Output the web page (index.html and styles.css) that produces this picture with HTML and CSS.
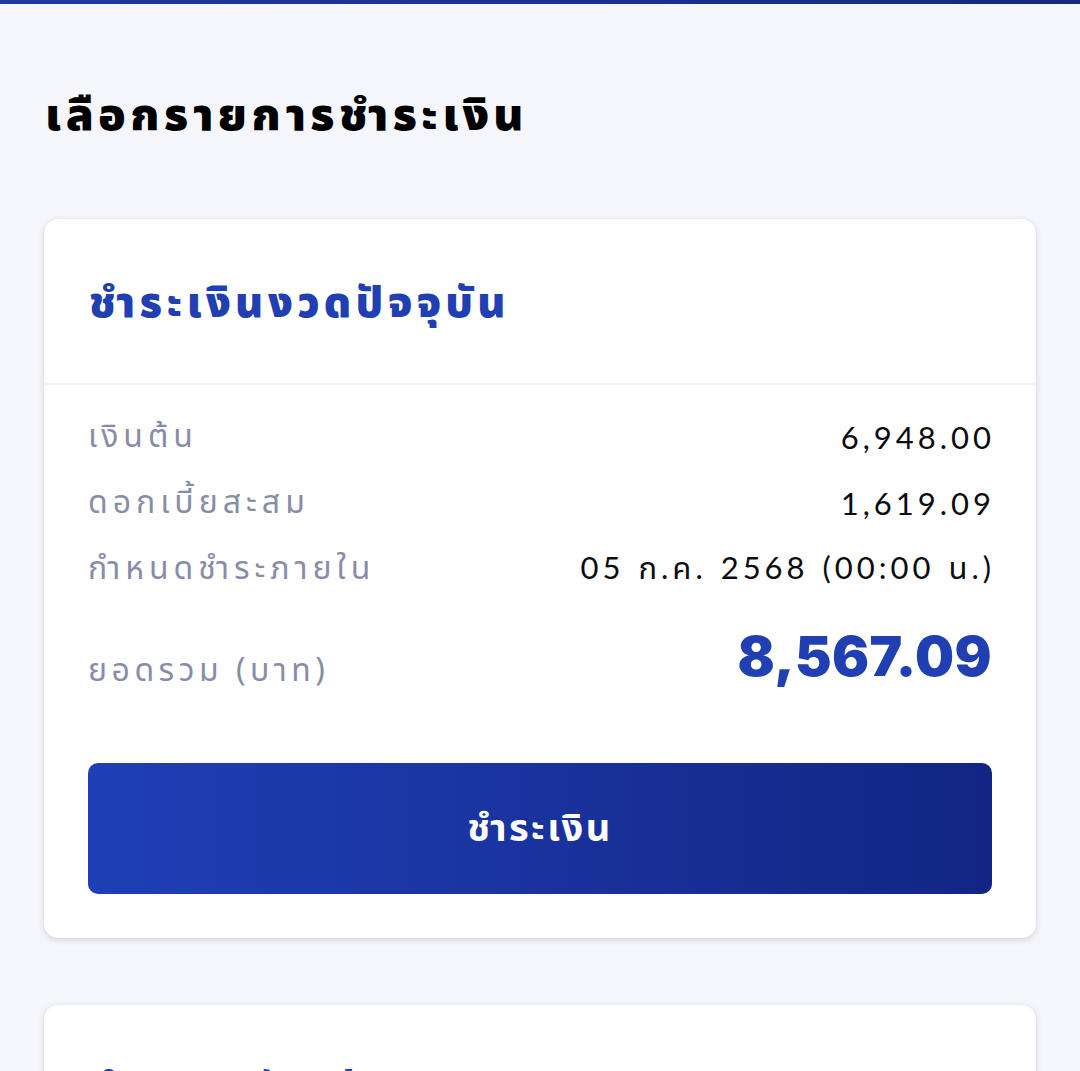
FILE: index.html
```html
<!DOCTYPE html>
<html lang="th">
<head>
<meta charset="utf-8">
<title>เลือกรายการชำระเงิน</title>
<link rel="stylesheet" href="styles.css">
</head>
<body>
<div class="topbar"></div>
<main class="page">
  <h1 class="page-title">เลือกรายการชำระเงิน</h1>

  <section class="card">
    <div class="card-head">
      <h2 class="card-title">ชำระเงินงวดปัจจุบัน</h2>
    </div>
    <div class="card-body">
      <div class="row">
        <span class="label">เงินต้น</span>
        <span class="value">6,948.00</span>
      </div>
      <div class="row">
        <span class="label">ดอกเบี้ยสะสม</span>
        <span class="value">1,619.09</span>
      </div>
      <div class="row">
        <span class="label">กำหนดชำระภายใน</span>
        <span class="value">05 ก.ค. 2568 (00:00 น.)</span>
      </div>
      <div class="row total">
        <span class="label">ยอดรวม (บาท)</span>
        <span class="total-value">8,567.09</span>
      </div>
      <button class="pay-btn" type="button">ชำระเงิน</button>
    </div>
  </section>

  <section class="card">
    <div class="card-head">
      <h2 class="card-title">ชำระปิดบัญชี</h2>
    </div>
  </section>
</main>
</body>
</html>
```

FILE: styles.css
```css
* { box-sizing: border-box; }

html, body {
  margin: 0;
  padding: 0;
  background: #f5f6fb;
  font-family: "Noto Sans Thai", "Noto Sans", "Liberation Sans", sans-serif;
  color: #000;
}

.topbar {
  height: 4px;
  background: linear-gradient(90deg, #1f3aa0, #15297f);
}

.page {
  padding: 0 44px;
}

.page-title {
  margin: 0;
  padding: 84px 0 0 1px;
  height: 215px;
  font-size: 45px;
  font-weight: 900;
  line-height: 56px;
  letter-spacing: 4.6px;
}

.card {
  background: #fff;
  border-radius: 14px;
  box-shadow: 0 2px 6px rgba(30, 40, 80, 0.16), 0 0 1px rgba(30, 40, 80, 0.12);
  margin-bottom: 67px;
}

.card-head {
  height: 166px;
  display: flex;
  align-items: center;
  padding: 6px 45px 0 45px;
  border-bottom: 2px solid #f1f2f6;
}

.card-title {
  margin: 0;
  color: #1f3fb2;
  font-size: 42px;
  font-weight: 900;
  letter-spacing: 4.7px;
}

.card-body {
  padding: 19px 44px 44px 44px;
}

.row {
  height: 66px;
  display: flex;
  justify-content: space-between;
  align-items: center;
}

.label {
  color: #888da7;
  font-size: 32px;
  letter-spacing: 5px;
}

.value {
  font-family: "Lato", "Noto Sans Thai", sans-serif;
  font-size: 31px;
  letter-spacing: 4px;
  word-spacing: 2px;
  color: #0b0b10;
  margin-right: -3px;
}

.row.total {
  height: 100px;
  margin-top: 10px;
  align-items: baseline;
  padding-top: 11px;
}

.row.total .label {
  letter-spacing: 4.5px;
  transform: translateY(5px);
}

.total-value {
  font-family: "Inter", "Lato", sans-serif;
  font-size: 55px;
  font-weight: 900;
  letter-spacing: 0.4px;
  color: #1f3fb2;
}

.pay-btn {
  display: block;
  width: 100%;
  height: 131px;
  margin-top: 51px;
  border: 0;
  border-radius: 10px;
  background: linear-gradient(90deg, #1f3fb6 0%, #1a34a0 45%, #112683 100%);
  color: #fff;
  font-family: inherit;
  font-size: 38px;
  font-weight: 700;
  letter-spacing: 2.5px;
  padding-top: 2px;
}
```
